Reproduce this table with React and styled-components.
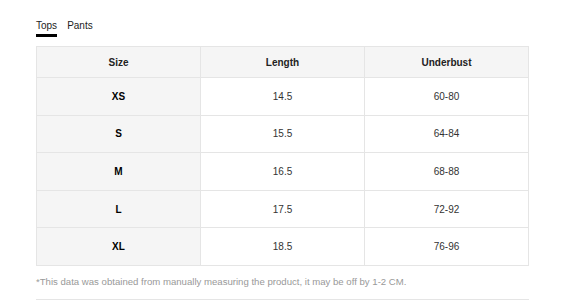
import React, { useState } from "react";
import styled, { createGlobalStyle } from "styled-components";

const Global = createGlobalStyle`
  html, body { margin: 0; padding: 0; background: #fff; }
  body { font-family: "Liberation Sans", Arial, sans-serif; }
`;

const Page = styled.div`
  width: 493px;
  margin-left: 36px;
  padding-top: 19px;
`;

const Tabs = styled.div`
  display: flex;
  gap: 10px;
`;

const Tab = styled.button`
  background: none;
  border: 0;
  padding: 0 0 1px;
  margin: 0;
  font-family: inherit;
  font-size: 10px;
  line-height: 14px;
  color: #222;
  cursor: pointer;
  border-bottom: 3px solid ${(p) => (p.$active ? "#000" : "transparent")};
`;

const Table = styled.table`
  margin-top: 9px;
  width: 100%;
  border-collapse: collapse;
  table-layout: fixed;
  font-size: 10px;
`;

const HeadCell = styled.th`
  height: 30px;
  padding: 0;
  border: 1px solid #e5e5e5;
  background: #f5f5f5;
  font-weight: bold;
  color: #222;
  text-align: center;
`;

const Cell = styled.td`
  height: 36.6px;
  padding: 0;
  border: 1px solid #e5e5e5;
  text-align: center;
  background: ${(p) => (p.$label ? "#f5f5f5" : "#fff")};
  font-weight: ${(p) => (p.$label ? "bold" : "normal")};
  color: ${(p) => (p.$label ? "#000" : "#333")};
`;

const Note = styled.p`
  margin: 0;
  padding: 10px 0 11px;
  font-size: 9.6px;
  line-height: 12px;
  color: #999;
  border-bottom: 1px solid #e5e5e5;
`;

const rows = [
  ["XS", "14.5", "60-80"],
  ["S", "15.5", "64-84"],
  ["M", "16.5", "68-88"],
  ["L", "17.5", "72-92"],
  ["XL", "18.5", "76-96"],
];

const data = { Tops: rows, Pants: rows };

export default function App() {
  const [tab, setTab] = useState("Tops");
  return (
    <>
      <Global />
      <Page>
        <Tabs>
          {["Tops", "Pants"].map((t) => (
            <Tab key={t} $active={tab === t} onClick={() => setTab(t)}>
              {t}
            </Tab>
          ))}
        </Tabs>
        <Table>
          <thead>
            <tr>
              <HeadCell>Size</HeadCell>
              <HeadCell>Length</HeadCell>
              <HeadCell>Underbust</HeadCell>
            </tr>
          </thead>
          <tbody>
            {data[tab].map((r) => (
              <tr key={r[0]}>
                <Cell $label>{r[0]}</Cell>
                <Cell>{r[1]}</Cell>
                <Cell>{r[2]}</Cell>
              </tr>
            ))}
          </tbody>
        </Table>
        <Note>
          *This data was obtained from manually measuring the product, it may be off by 1-2 CM.
        </Note>
      </Page>
    </>
  );
}
